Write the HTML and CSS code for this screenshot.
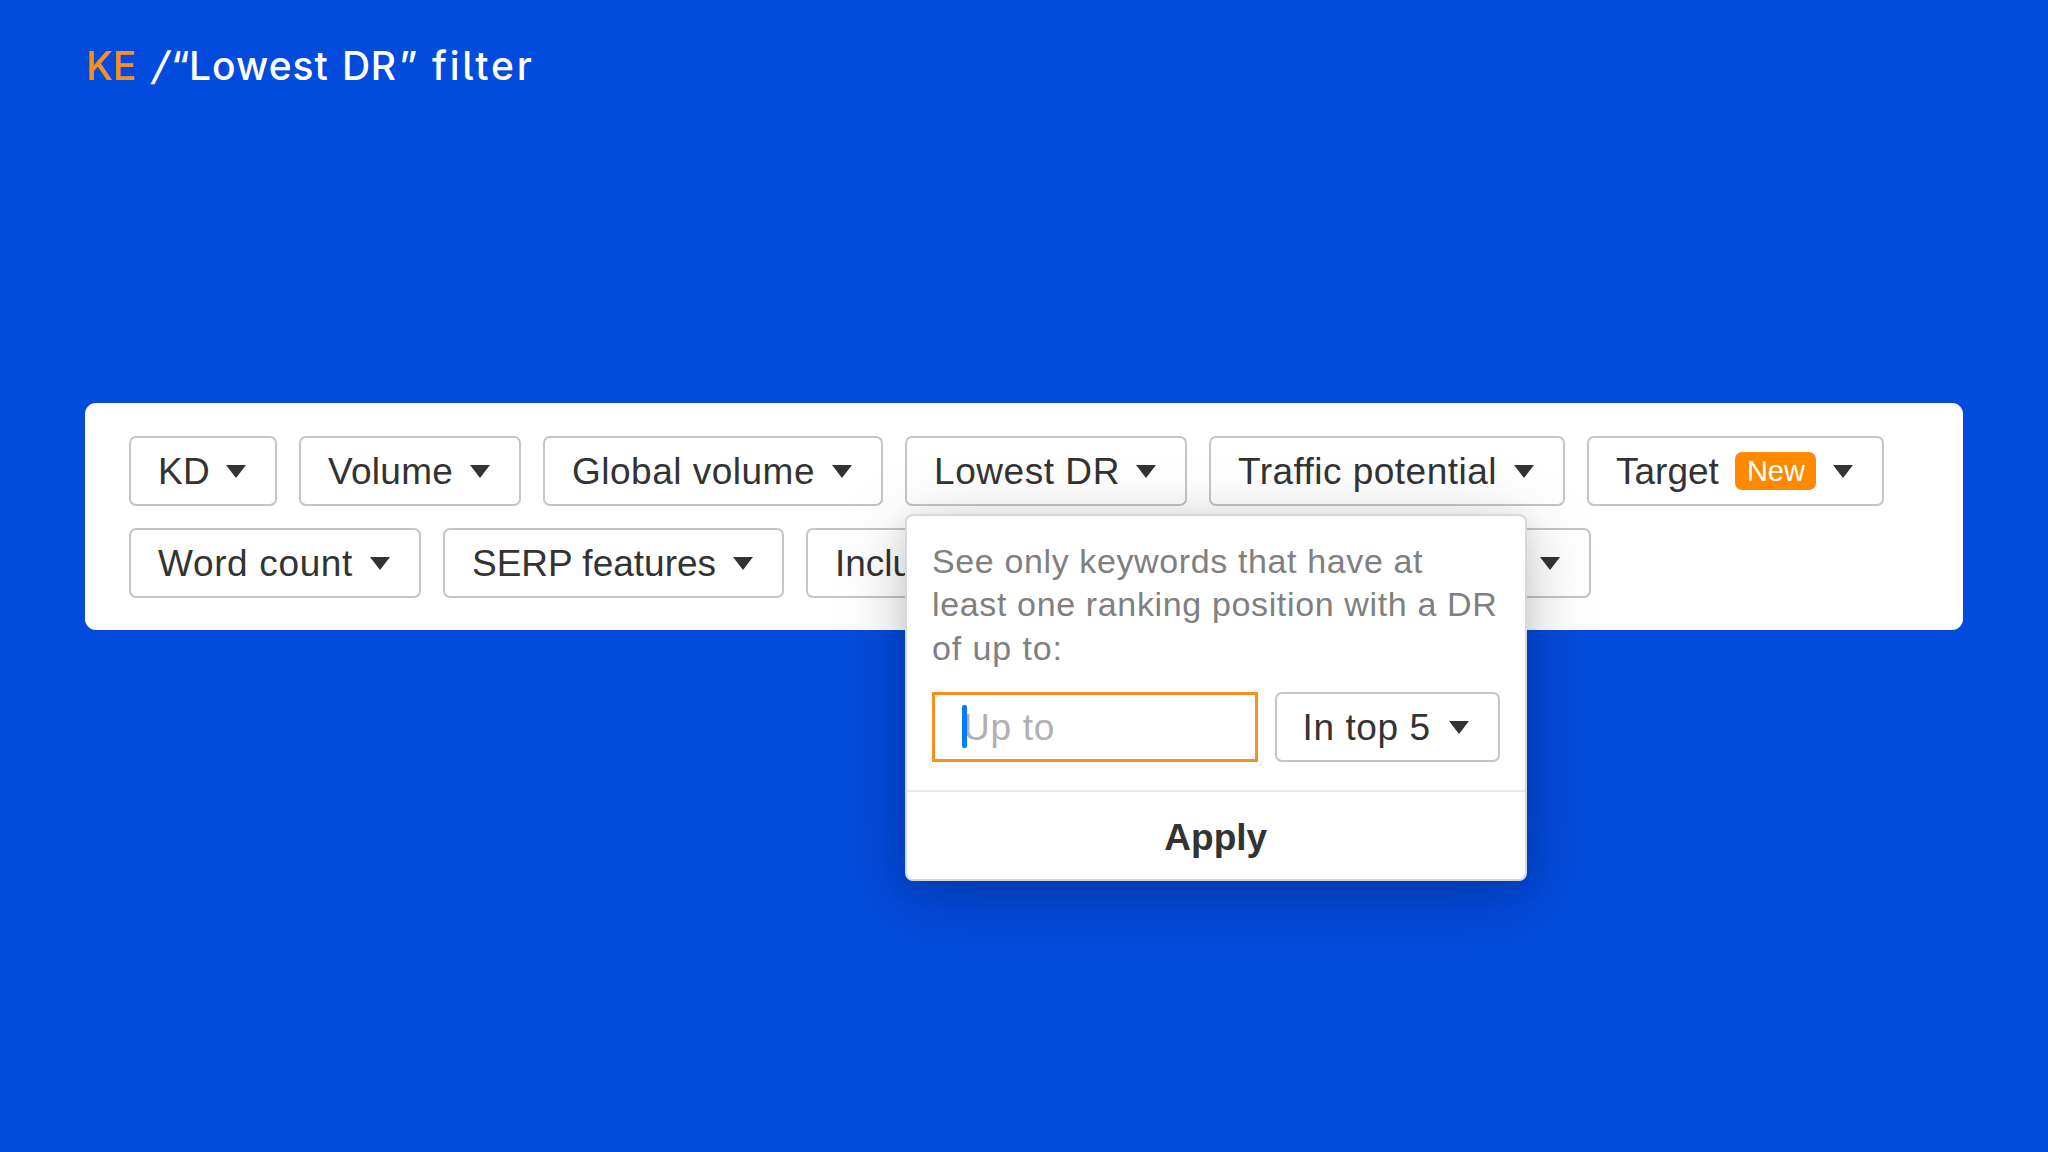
FILE: index.html
```html
<!DOCTYPE html>
<html lang="en">
<head>
<meta charset="utf-8">
<title>KE / “Lowest DR” filter</title>
<link rel="stylesheet" href="styles.css">
</head>
<body>
<svg class="defs" aria-hidden="true"><symbol id="caret" viewBox="0 0 20 13"><path d="M0 0H20L10 13Z"/></symbol></svg>
<main class="page">
  <h1 class="title"><span class="title-tool">KE</span><span class="title-slash">/</span><span class="title-open">“</span><span class="title-lowest">Lowest</span><span class="title-dr">DR</span><span class="title-close">”</span><span class="title-filter">filter</span></h1>
  <section class="panel">
    <div class="row">
      <button class="btn w-kd"><span>KD</span><svg class="caret"><use href="#caret"/></svg></button>
      <button class="btn w-volume"><span>Volume</span><svg class="caret"><use href="#caret"/></svg></button>
      <button class="btn w-global"><span>Global volume</span><svg class="caret"><use href="#caret"/></svg></button>
      <div class="anchor">
        <button class="btn w-lowest"><span>Lowest DR</span><svg class="caret"><use href="#caret"/></svg></button>
        <div class="popup">
          <div class="popup-body">
            <p class="hint"><span class="l1">See only keywords that have at</span><br><span class="l2">least one ranking position with a DR</span><br><span class="l3">of up to:</span></p>
            <div class="fields">
              <div class="input"><span class="cursor"></span><span class="placeholder">Up to</span></div>
              <button class="btn w-top"><span>In top 5</span><svg class="caret"><use href="#caret"/></svg></button>
            </div>
          </div>
          <button class="apply">Apply</button>
        </div>
      </div>
      <button class="btn w-traffic"><span>Traffic potential</span><svg class="caret"><use href="#caret"/></svg></button>
      <button class="btn w-target"><span>Target</span><span class="badge">New</span><svg class="caret"><use href="#caret"/></svg></button>
    </div>
    <div class="row">
      <button class="btn w-word"><span>Word count</span><svg class="caret"><use href="#caret"/></svg></button>
      <button class="btn w-serp"><span>SERP features</span><svg class="caret"><use href="#caret"/></svg></button>
      <button class="btn w-include"><span>Include</span><svg class="caret"><use href="#caret"/></svg></button>
      <button class="btn w-more"><svg class="caret"><use href="#caret"/></svg></button>
    </div>
  </section>
</main>
</body>
</html>
```
FILE: styles.css
```css
* { box-sizing: border-box; }
body {
  margin: 0;
  background: #034bdc;
  font-family: "Liberation Sans", Arial, sans-serif;
  color: #333;
}
.defs { display: none; }
.page {
  width: 2048px;
  height: 1152px;
  padding: 40px 85px 0;
  overflow: hidden;
}
.title {
  display: flex;
  height: 52px;
  margin: 0;
  padding-left: 1px;
  font: 450 39px/52px Inter, sans-serif;
  font-feature-settings: "cv05" 1, "calt" 0;
  color: #fff;
  white-space: nowrap;
}
.title-tool { width: 68px; color: #f7901e; }
.title-slash { width: 17px; transform: skewX(-13deg); }
.title-open { width: 18px; }
.title-lowest { width: 153px; letter-spacing: 1px; }
.title-dr { width: 57px; letter-spacing: .5px; }
.title-close { width: 33px; }
.title-filter { letter-spacing: 2.8px; }
.panel {
  display: flex;
  flex-direction: column;
  gap: 22px;
  width: 1878px;
  height: 227px;
  margin-top: 311px;
  padding: 32.5px 44px;
  border-radius: 11px;
  background: #fff;
}
.row { display: flex; gap: 22px; }
.btn {
  display: flex;
  flex: none;
  align-items: center;
  justify-content: space-between;
  height: 70px;
  padding: 1px 29px 0 27px;
  border: 2px solid #c5c5c5;
  border-radius: 7px;
  background: transparent;
  color: #333;
  font: 37px/42px "Liberation Sans", Arial, sans-serif;
  white-space: nowrap;
}
.btn > span:first-child { padding-top: 2px; }
.caret { flex: none; width: 20px; height: 13px; fill: #333; }
.w-kd { width: 148px; letter-spacing: .4px; }
.w-volume { width: 222px; letter-spacing: .3px; }
.w-global { width: 340px; letter-spacing: .5px; }
.w-lowest { width: 282px; letter-spacing: .55px; }
.w-traffic { width: 356px; letter-spacing: .47px; }
.w-target { width: 297px; }
.w-word { width: 292px; letter-spacing: .65px; }
.w-serp { width: 341px; }
.w-include { width: 218px; }
.w-more { width: 545px; justify-content: flex-end; }
.w-top { width: 225px; padding-left: 26px; letter-spacing: .6px; }
.badge {
  width: 81px;
  height: 38px;
  border-radius: 7px;
  background: #ff8a00;
  color: #fff;
  font-size: 29px;
  line-height: 39px;
  text-align: center;
}
.anchor { position: relative; }
.popup {
  position: absolute;
  z-index: 1;
  top: 78.5px;
  left: 0;
  width: 621.5px;
  height: 367px;
  border: 2px solid #d6d8de;
  border-radius: 8px;
  background: #fff;
  box-shadow: 0 14px 70px rgba(0, 0, 0, .22), 0 6px 24px rgba(0, 0, 0, .08);
}
.popup-body { height: 276px; padding: 24px 25px 0; border-bottom: 2px solid #e8e8e8; }
.hint {
  margin: 0;
  color: #808080;
  font-size: 34px;
  line-height: 43.3px;
  white-space: nowrap;
}
.l1 { letter-spacing: .62px; }
.l2 { letter-spacing: .64px; }
.l3 { letter-spacing: .9px; }
.fields { display: flex; justify-content: space-between; margin-top: 22px; }
.input {
  display: flex;
  align-items: center;
  width: 326px;
  height: 70px;
  padding: 0 0 0 27px;
  border: 3px solid #f7901e;
  font-size: 37px;
}
.cursor { z-index: 1; width: 5px; height: 43px; border-radius: 2px; background: #007aff; }
.placeholder { margin-left: -4px; padding-top: 3px; letter-spacing: .7px; color: #b0b0b0; }
.apply {
  display: block;
  width: 100%;
  height: 87px;
  padding: 5px 0 0;
  border: 0;
  background: none;
  color: #333;
  font: bold 37px/42px "Liberation Sans", Arial, sans-serif;
}
```
